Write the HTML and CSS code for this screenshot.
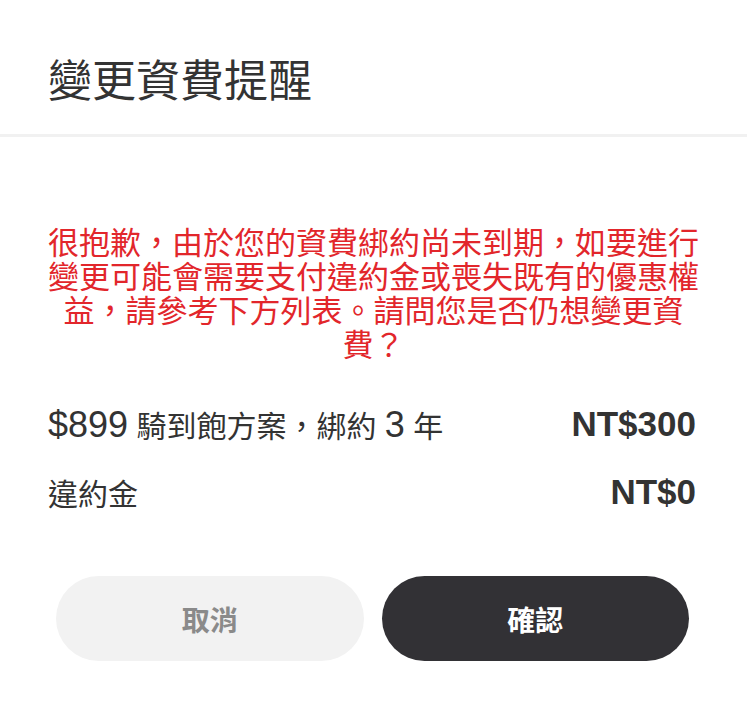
FILE: index.html
```html
<!DOCTYPE html>
<html lang="zh-Hant">
<head>
    <meta charset="UTF-8">
    <meta name="viewport" content="width=device-width, initial-scale=1.0">
    <title>變更資費提醒</title>
    <link rel="stylesheet" href="styles.css">
</head>
<body>

    <!-- 提醒視窗 -->
    <div class="dialog">
        <div class="dialog-header">
            <h1>變更資費提醒</h1>
        </div>

        <div class="dialog-body">
            <p class="warning">很抱歉，由於您的資費綁約尚未到期，如要進行變更可能會需要支付違約金或喪失既有的優惠權益，請參考下方列表。請問您是否仍想變更資費？</p>

            <div class="fee-row">
                <span class="fee-label"><span class="num">$899</span> 騎到飽方案，綁約 <span class="num">3</span> 年</span>
                <span class="fee-amount">NT$300</span>
            </div>
            <div class="fee-row">
                <span class="fee-label">違約金</span>
                <span class="fee-amount">NT$0</span>
            </div>
        </div>

        <div class="dialog-actions">
            <button class="btn btn-cancel">取消</button>
            <button class="btn btn-confirm">確認</button>
        </div>
    </div>

</body>
</html>
```

FILE: styles.css
```css
body {
    margin: 0;
    background-color: #fff;
    font-family: "Liberation Sans", "Noto Sans CJK TC", sans-serif;
    color: #333;
}
.dialog {
    width: 747px;
    height: 712px;
    background-color: #fff;
}
.dialog-header {
    padding: 54px 48px 24px;
    border-bottom: 3px solid #f1f1f1;
}
.dialog-header h1 {
    margin: 0;
    font-size: 44px;
    line-height: 56px;
    font-weight: normal;
    color: #333;
}
.dialog-body {
    padding: 90px 48px 0 48px;
}
.warning {
    margin: 0 -4px;
    font-size: 31px;
    line-height: 34px;
    color: #e2262b;
    text-align: center;
}
.fee-row {
    display: flex;
    justify-content: space-between;
    align-items: center;
    height: 40px;
    margin-top: 28px;
}
.warning + .fee-row {
    margin-top: 41px;
}
.fee-label {
    font-size: 30px;
    color: #333;
}
.fee-label .num {
    font-size: 36px;
}
.fee-amount {
    font-size: 35px;
    font-weight: bold;
    color: #333;
    margin-right: 3px;
}
.dialog-actions {
    display: flex;
    gap: 18px;
    padding: 64px 58px 0 56px;
}
.btn {
    flex: 1;
    height: 85px;
    border: none;
    border-radius: 43px;
    font-family: "Liberation Sans", "Noto Sans CJK TC", sans-serif;
    font-size: 28px;
    font-weight: bold;
}
.btn-cancel {
    background-color: #f2f2f2;
    color: #8a8a8a;
}
.btn-confirm {
    background-color: #323135;
    color: #fff;
}
```
